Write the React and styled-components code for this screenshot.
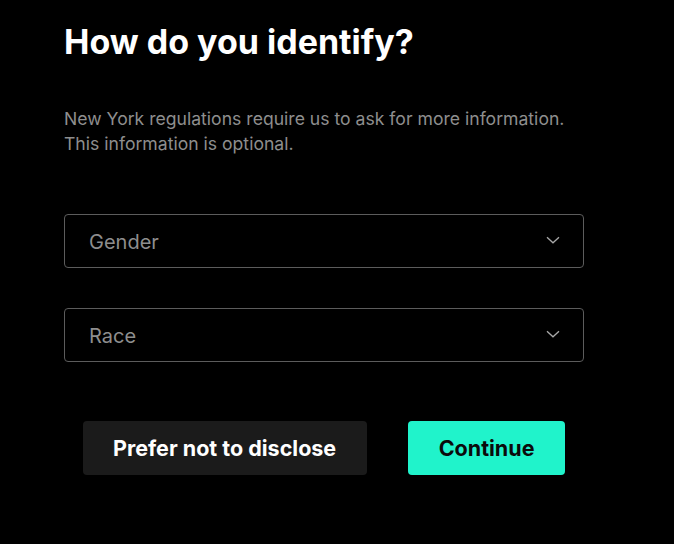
import React from 'react'
import styled, { createGlobalStyle } from 'styled-components'

const GlobalStyle = createGlobalStyle`
  html, body {
    margin: 0;
    padding: 0;
    background: #000;
  }
  body {
    font-family: Inter, "Noto Sans", sans-serif;
    color: #fff;
  }
`

const Page = styled.div`
  width: 674px;
  height: 544px;
  background: #000;
  box-sizing: border-box;
  padding: 20px 0 0 64px;
`

const Form = styled.div`
  width: 520px;
  display: flex;
  flex-direction: column;
`

const Title = styled.h1`
  margin: 0;
  font-size: 34px;
  line-height: 44px;
  font-weight: 700;
  color: #fff;
`

const Subtitle = styled.p`
  margin: 42px 0 0;
  font-size: 17.6px;
  line-height: 25px;
  color: #8e8e8e;
`

const Fields = styled.div`
  display: flex;
  flex-direction: column;
  gap: 40px;
  margin-top: 58px;
`

const Select = styled.div`
  height: 54px;
  box-sizing: border-box;
  border: 1px solid #5c5c5c;
  border-radius: 4px;
  display: flex;
  align-items: center;
  justify-content: space-between;
  padding: 0 23px 0 24px;
  cursor: pointer;
`

const SelectLabel = styled.span`
  font-size: 20px;
  line-height: 24px;
  margin-top: 2px;
  color: #8e8e8e;
`

const Chevron = styled.svg`
  width: 14px;
  height: 8px;
  margin-top: -3px;
`

const Actions = styled.div`
  display: flex;
  justify-content: center;
  gap: 41px;
  margin-top: 59px;
`

const Button = styled.button`
  height: 54px;
  border: none;
  border-radius: 4px;
  font-family: Inter, "Noto Sans", sans-serif;
  font-size: 21.5px;
  font-weight: 700;
  padding: 0 ${p => p.$pad}px;
  background: ${p => (p.$primary ? '#20f3cb' : '#1b1b1b')};
  color: ${p => (p.$primary ? '#0b0b0b' : '#fff')};
  cursor: pointer;
`

const Dropdown = ({ label }) => (
  <Select>
    <SelectLabel>{label}</SelectLabel>
    <Chevron viewBox="0 0 14 8" fill="none">
      <path d="M1 1.2l6 5.6 6-5.6" stroke="#a8a8a8" strokeWidth="1.3" />
    </Chevron>
  </Select>
)

export default function App() {
  return (
    <Page>
      <GlobalStyle />
      <Form>
        <Title>How do you identify?</Title>
        <Subtitle>
          New York regulations require us to ask for more information.
          <br />
          This information is optional.
        </Subtitle>
        <Fields>
          <Dropdown label="Gender" />
          <Dropdown label="Race" />
        </Fields>
        <Actions>
          <Button $pad={30.5}>Prefer not to disclose</Button>
          <Button $primary $pad={31}>Continue</Button>
        </Actions>
      </Form>
    </Page>
  )
}
